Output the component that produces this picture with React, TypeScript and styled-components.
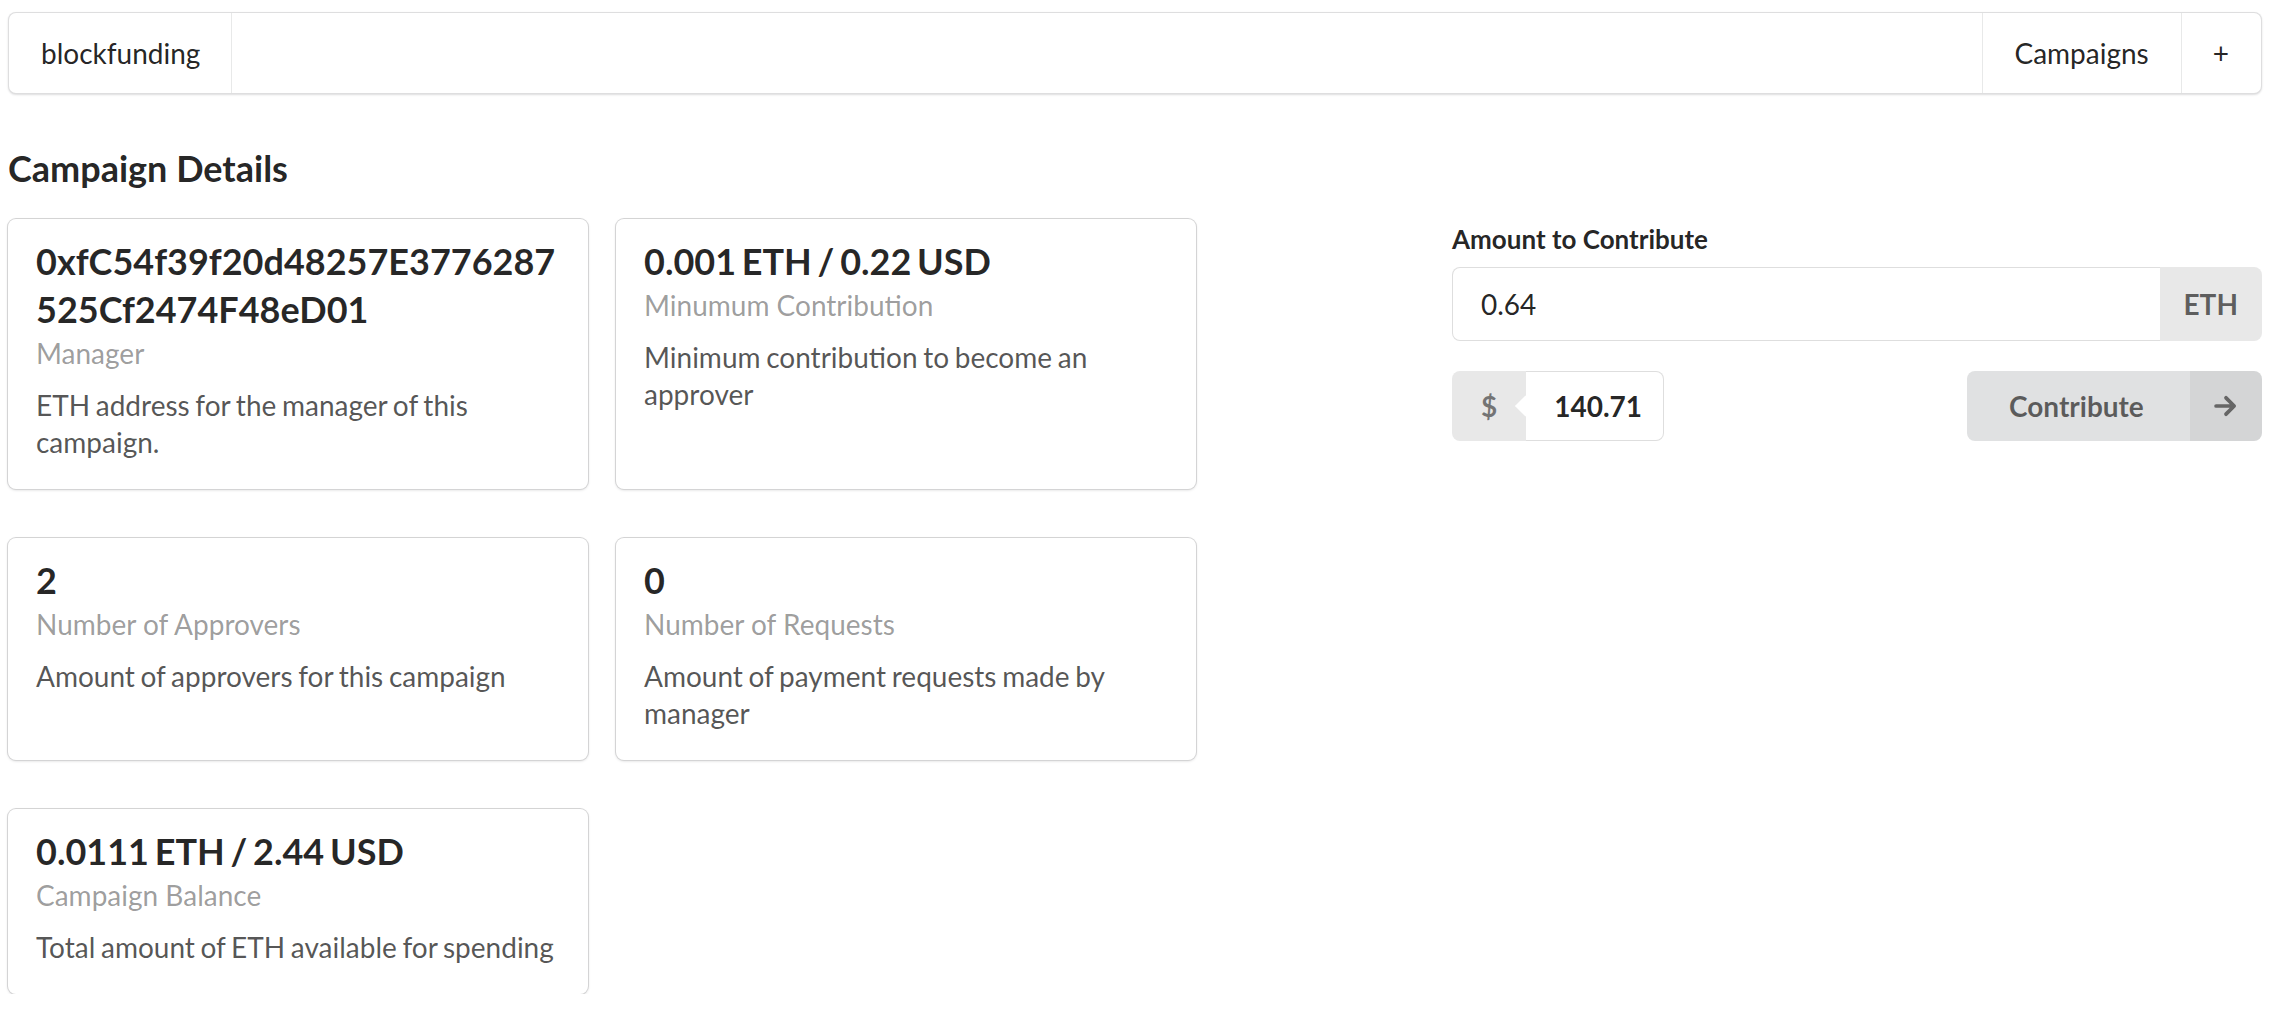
import React from "react";
import styled, { createGlobalStyle } from "styled-components";

const GlobalStyle = createGlobalStyle`
  * {
    box-sizing: border-box;
  }
  body {
    margin: 0;
    background: #ffffff;
    font-family: Lato, "Helvetica Neue", Arial, sans-serif;
    font-size: 28px;
    line-height: 40px;
    color: rgba(0, 0, 0, 0.87);
  }
`;

const details = [
  {
    header: "0xfC54f39f20d48257E3776287525Cf2474F48eD01",
    meta: "Manager",
    description: "ETH address for the manager of this campaign.",
  },
  {
    header: "0.001 ETH / 0.22 USD",
    meta: "Minumum Contribution",
    description: "Minimum contribution to become an approver",
  },
  {
    header: "2",
    meta: "Number of Approvers",
    description: "Amount of approvers for this campaign",
  },
  {
    header: "0",
    meta: "Number of Requests",
    description: "Amount of payment requests made by manager",
  },
  {
    header: "0.0111 ETH / 2.44 USD",
    meta: "Campaign Balance",
    description: "Total amount of ETH available for spending",
  },
];

const ArrowRight = () => (
  <svg width="28" height="28" viewBox="0 0 24 24" fill="none">
    <path
      d="M3.5 12h15M12 5l7 7-7 7"
      stroke="#666666"
      strokeWidth="3.2"
      strokeLinecap="round"
      strokeLinejoin="round"
    />
  </svg>
);

const App = () => {
  const [amount, setAmount] = React.useState<string>("0.64");

  return (
    <Page>
      <GlobalStyle />
      <Menu>
        <MenuItem divider="right">blockfunding</MenuItem>
        <Spacer />
        <MenuItem divider="left">Campaigns</MenuItem>
        <MenuItem divider="left">+</MenuItem>
      </Menu>

      <Title>Campaign Details</Title>

      <Grid>
        <Cards>
          {details.map((el) => (
            <Card key={el.meta}>
              <CardHeader>{el.header}</CardHeader>
              <Meta>{el.meta}</Meta>
              <Description>{el.description}</Description>
            </Card>
          ))}
        </Cards>

        <Form>
          <Label>Amount to Contribute</Label>
          <InputRow>
            <Input value={amount} onChange={(e) => setAmount(e.target.value)} />
            <InputTag side="right">ETH</InputTag>
          </InputRow>
          <ActionRow>
            <UsdBox>
              <InputTag side="left" muted>
                $
              </InputTag>
              <UsdValue>140.71</UsdValue>
            </UsdBox>
            <Button>
              <ButtonText>Contribute</ButtonText>
              <ButtonIcon>
                <ArrowRight />
              </ButtonIcon>
            </Button>
          </ActionRow>
        </Form>
      </Grid>
    </Page>
  );
};

export default App;

const Page = styled.div`
  width: 2254px;
  margin-left: 8px;
  padding-top: 12px;
`;

const Menu = styled.div`
  display: flex;
  align-items: stretch;
  height: 82px;
  background: #ffffff;
  border: 1px solid rgba(34, 36, 38, 0.15);
  border-radius: 8px;
  box-shadow: 0 1px 2px 0 rgba(34, 36, 38, 0.15);
`;

const MenuItem = styled.div<{ divider: "left" | "right" }>`
  display: flex;
  align-items: center;
  padding: 0 32px;
  font-size: 28px;
  line-height: 28px;
  color: rgba(0, 0, 0, 0.87);
  position: relative;

  &::before {
    content: "";
    position: absolute;
    top: 0;
    bottom: 0;
    width: 1px;
    background: rgba(34, 36, 38, 0.1);
    ${({ divider }) => (divider === "left" ? "left: 0;" : "right: 0;")}
  }
`;

const Spacer = styled.div`
  flex: 1;
`;

const Title = styled.h3`
  margin: 51px 0 28px;
  font-size: 36px;
  line-height: 46px;
  font-weight: 700;
  color: rgba(0, 0, 0, 0.87);
`;

const Grid = styled.div`
  display: grid;
  grid-template-columns: 1388px 810px;
  column-gap: 56px;
  align-items: start;
`;

const Cards = styled.div`
  display: grid;
  grid-template-columns: repeat(2, 580px);
  column-gap: 28px;
  row-gap: 49px;
`;

const Card = styled.div`
  display: flex;
  flex-direction: column;
  padding: 28px;
  background: #ffffff;
  border-radius: 8px;
  box-shadow: 0 1px 3px 0 #d4d4d5, 0 0 0 1px #d4d4d5;
`;

const CardHeader = styled.div`
  margin-top: -10px;
  font-size: 36px;
  line-height: 48px;
  font-weight: 700;
  word-spacing: -3px;
  color: rgba(0, 0, 0, 0.85);
  word-break: break-all;
`;

const Meta = styled.div`
  font-size: 28px;
  line-height: 40px;
  color: rgba(0, 0, 0, 0.4);
`;

const Description = styled.div`
  margin-top: 14px;
  font-size: 28px;
  line-height: 37px;
  word-spacing: -1.5px;
  color: rgba(0, 0, 0, 0.68);
`;

const Form = styled.div`
  display: flex;
  flex-direction: column;
`;

const Label = styled.div`
  font-size: 26px;
  line-height: 40px;
  font-weight: 700;
  margin-bottom: 8px;
  color: rgba(0, 0, 0, 0.87);
`;

const InputRow = styled.div`
  display: flex;
  height: 74px;
  margin-bottom: 30px;
`;

const Input = styled.input`
  flex: 1;
  min-width: 0;
  padding: 19px 28px;
  font-family: Lato, "Helvetica Neue", Arial, sans-serif;
  font-size: 28px;
  line-height: 34px;
  color: rgba(0, 0, 0, 0.87);
  border: 1px solid rgba(34, 36, 38, 0.15);
  border-right: 0;
  border-radius: 8px 0 0 8px;
  outline: none;
`;

const InputTag = styled.div<{ side: "left" | "right"; muted?: boolean }>`
  display: flex;
  align-items: center;
  justify-content: center;
  padding: 0 ${({ side }) => (side === "right" ? "24px" : "29px")};
  background: #e8e8e8;
  font-size: 28px;
  font-weight: 700;
  color: ${({ muted }) => (muted ? "rgba(0, 0, 0, 0.5)" : "rgba(0, 0, 0, 0.6)")};
  border-radius: ${({ side }) => (side === "right" ? "0 8px 8px 0" : "8px 0 0 8px")};
`;

const ActionRow = styled.div`
  display: flex;
  justify-content: space-between;
  align-items: flex-start;
`;

const UsdBox = styled.div`
  display: flex;
  height: 70px;
  width: 212px;
`;

const UsdValue = styled.div`
  flex: 1;
  display: flex;
  align-items: center;
  padding-left: 28px;
  position: relative;
  font-size: 28px;
  font-weight: 700;
  color: rgba(0, 0, 0, 0.87);
  border: 1px solid rgba(34, 36, 38, 0.15);
  border-left: 0;
  border-radius: 0 8px 8px 0;

  &::before {
    content: "";
    position: absolute;
    left: -8px;
    top: 50%;
    width: 15px;
    height: 15px;
    background: #ffffff;
    transform: translateY(-50%) rotate(45deg);
  }
`;

const Button = styled.button`
  display: flex;
  align-items: stretch;
  height: 70px;
  width: 295px;
  padding: 0;
  border: 0;
  border-radius: 8px;
  overflow: hidden;
  background: #e0e1e2;
  font-family: Lato, "Helvetica Neue", Arial, sans-serif;
  cursor: pointer;
`;

const ButtonText = styled.span`
  flex: 1;
  display: flex;
  align-items: center;
  padding-left: 42px;
  font-size: 28px;
  font-weight: 700;
  color: rgba(0, 0, 0, 0.6);
`;

const ButtonIcon = styled.span`
  width: 72px;
  display: flex;
  align-items: center;
  justify-content: center;
  background: rgba(0, 0, 0, 0.05);
`;
